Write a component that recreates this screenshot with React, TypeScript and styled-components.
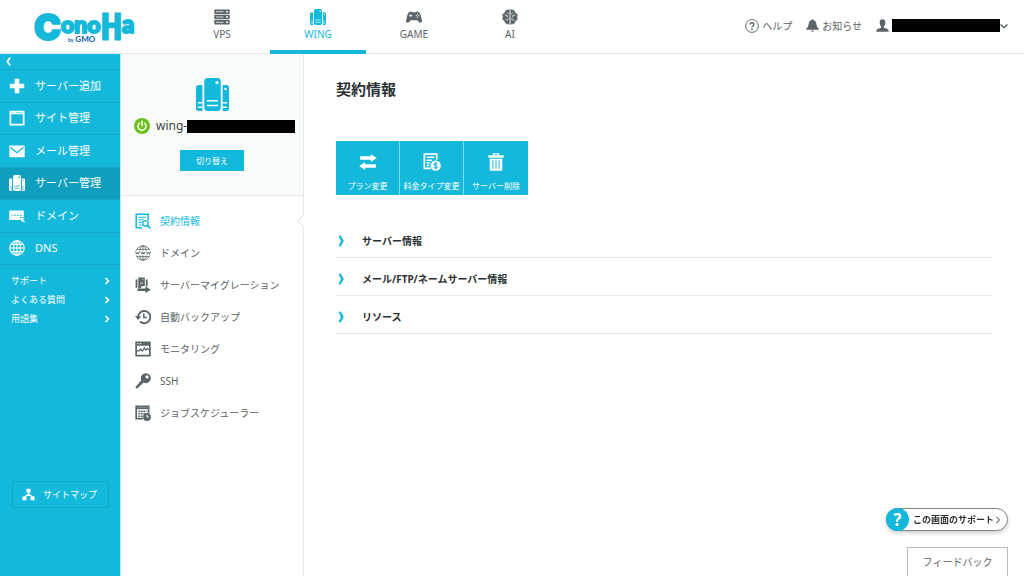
import React from 'react';
import styled, { createGlobalStyle, css } from 'styled-components';

const CYAN = '#13b8da';
const CYAN_DARK = '#0f9ebd';
const CYAN_LINE = '#11a8c8';
const INK = '#5b6467';
const LINE = '#e4e8e9';

const GlobalStyle = createGlobalStyle`
  *, *::before, *::after { box-sizing: border-box; }
  body {
    margin: 0;
    background: #fff;
    color: ${INK};
    font-family: "Noto Sans", "Noto Sans CJK JP", sans-serif;
    font-size: 10px;
    line-height: 16px;
  }
  button { font: inherit; color: inherit; background: none; border: 0; padding: 0; margin: 0; cursor: pointer; }
  a { color: inherit; text-decoration: none; }
  ul { list-style: none; margin: 0; padding: 0; }
  svg { display: block; flex: none; }
`;

/* ---------- icons ---------- */

type IconProps = { size?: number };

const Svg = ({ size = 16, children }: IconProps & { children: React.ReactNode }) => (
  <svg width={size} height={size} viewBox="0 0 16 16" fill="currentColor" aria-hidden="true">
    {children}
  </svg>
);

const line = { fill: 'none', stroke: 'currentColor' } as const;

const RackIcon = (p: IconProps) => (
  <Svg {...p}>
    {[0.5, 5.8, 11.1].map((y) => (
      <g key={y}>
        <rect x="0.3" y={y} width="15.4" height="4.5" rx="0.8" />
        <path d={`M2 ${y + 2.2}h7.5`} stroke="#fff" strokeWidth="0.8" />
        <circle cx="13" cy={y + 2.2} r="1" fill="#fff" />
      </g>
    ))}
  </Svg>
);

const WingIcon = ({ cut = '#fff', ...p }: IconProps & { cut?: string }) => (
  <Svg {...p}>
    <path d="M1.300 3.400H3.100V16H1.300Q0 16 0 14.700V4.700Q0 3.400 1.300 3.400Z" />
    <path d="M12.900 3.400h1.800Q16 3.400 16 4.700v10Q16 16 14.700 16h-1.800Z" />
    <rect x="4" y="0" width="8" height="16" rx="1.700" />
    <g stroke={cut} strokeWidth="0.700" fill="none">
      <path d="M5.300 11h5.400M5.300 13.300h5.400M.9 12h2.200M.9 14.200h2.200M12.900 12h2.200M12.900 14.200h2.200" />
    </g>
    <circle cx="10.200" cy="2.200" r="0.800" fill={cut} />
    <circle cx="14.300" cy="5.300" r="0.600" fill={cut} />
  </Svg>
);

const GamepadIcon = (p: IconProps) => (
  <Svg {...p}>
    <path d="M4 2.700Q5.500 2.400 6.400 3.200h3.200Q10.500 2.400 12 2.700 13.800 3.100 14.600 6L15.900 11.400q.3 2.300-1.300 2.400-1.300 0-3.300-2.600H4.700q-2 2.600-3.300 2.600Q-.2 13.700 .1 11.400L1.400 6Q2.200 3.100 4 2.700Z" />
    <path d="M4.700 5.200v2.800M3.300 6.600h2.800" stroke="#fff" strokeWidth="0.900" />
    <circle cx="11.500" cy="5.200" r="0.600" fill="#fff" />
    <circle cx="12.700" cy="6.700" r="0.600" fill="#fff" />
    <circle cx="10.300" cy="6.700" r="0.600" fill="#fff" />
    <circle cx="11.500" cy="8.200" r="0.600" fill="#fff" />
  </Svg>
);

const BrainIcon = (p: IconProps) => (
  <Svg {...p}>
    <path d="M7.600.8v14.400L4 14.600 2.600 12 .6 10.200 1.200 8 .6 5.600 2.700 4 4.200 1.300ZM8.400.8v14.400l3.600-.6L13.400 12l2-1.800L14.800 8l.6-2.400L13.300 4l-1.500-2.700Z" strokeLinejoin="round" stroke="currentColor" strokeWidth="0.600" />
    <path d="M8 1v14M2.800 6.200h2.400v2.400M13.200 6.200h-2.400v2.400M3.600 11h2l1-1.600M12.400 11h-2l-1-1.600M5.300 3.400l1.600 1.500M10.700 3.400 9.100 4.900" stroke="#fff" strokeWidth="0.700" fill="none" />
  </Svg>
);

const HelpIcon = (p: IconProps) => (
  <Svg {...p}>
    <circle cx="8" cy="8" r="7.300" {...line} strokeWidth="1.100" />
    <path d="M5.800 6.400Q5.800 4.300 8 4.300t2.200 2q0 1.200-1.200 1.800T8 9.600" {...line} strokeWidth="1.500" />
    <circle cx="8" cy="11.600" r="1" />
  </Svg>
);

const BellIcon = (p: IconProps) => (
  <Svg {...p}>
    <path d="M8 .2q1 0 1.100 1Q12.400 2 12.600 5.600q.2 4.400 3 6.200v1.400H.4v-1.400q2.800-1.800 3-6.200Q3.600 2 6.900 1.200 7 .2 8 .2ZM6 14h4q-.4 1.800-2 1.800T6 14Z" />
  </Svg>
);

const UserIcon = (p: IconProps) => (
  <Svg {...p}>
    <path d="M8 .3q3.500 0 3.500 3.900 0 3.400-1.800 5v1.600l4.500 1.500q1.500.6 1.500 3.400H.3q0-2.800 1.500-3.400l4.500-1.500V9.200q-1.800-1.600-1.800-5Q4.500.3 8 .3Z" />
  </Svg>
);

const Chevron = ({ size = 8, to = 'right', weight = 3 }: IconProps & { to?: 'right' | 'left' | 'down'; weight?: number }) => (
  <Svg size={size}>
    <path
      d={to === 'right' ? 'M5 2l6 6-6 6' : to === 'left' ? 'M11 1L6 8l5 7' : 'M1 5l7 6 7-6'}
      {...line}
      strokeWidth={weight}
    />
  </Svg>
);

const SectionMark = (p: IconProps) => (
  <Svg {...p}><path d="M3.200 1H6.600L10.400 8 6.600 15H3.200L6.600 8Z" /></Svg>
);

const PlusIcon = (p: IconProps) => (
  <Svg {...p}><path d="M5.700.8h4.600v4.900h4.900v4.600h-4.900v4.900H5.700v-4.900H.8V5.700h4.900Z" /></Svg>
);

const WindowIcon = (p: IconProps) => (
  <Svg {...p}>
    <path fillRule="evenodd" d="M.5.8h15v14.600H.5ZM2.200 4.200v9.600h11.600V4.200Z" />
    <path d="M2.500 2.500h1M4.800 2.500h1M7 2.500h6.500" stroke={CYAN} strokeWidth="0.500" />
  </Svg>
);

const MailIcon = (p: IconProps) => (
  <Svg {...p}>
    <rect x="0.300" y="2.600" width="15.400" height="11.600" rx="0.800" />
    <path d="M1.500 4.200 8 9.600l6.500-5.400" fill="none" stroke={CYAN} strokeWidth="1.200" />
  </Svg>
);

const DomainIcon = (p: IconProps) => (
  <Svg {...p}>
    <path d="M.8 2.500h13.400q.6 0 .6.600v6.500l-4-.8 1 3.200H.8q-.6 0-.6-.6V3.100q0-.6.6-.6Z" />
    <path d="M2.500 7.200h1M4.800 7.200h2M7.800 7.200h2M10.800 7.200h2" stroke={CYAN} strokeWidth="1.100" />
    <path d="m11.600 9.400 4 1.400-1.400.8 1.600 1.800-1 1-1.800-1.700-.7 1.300Z" />
  </Svg>
);

const GlobeIcon = ({ band, ...p }: IconProps & { band?: boolean }) => (
  <Svg {...p}>
    <g {...line} strokeWidth={band ? 0.8 : 1.1}>
      <circle cx="8" cy="8" r="7.200" />
      <ellipse cx="8" cy="8" rx="3.500" ry="7.200" />
      <path d="M8 .8v14.400M1.800 4.400h12.400M1.800 11.600h12.400" />
      {!band && <path d="M.8 8h14.400" />}
    </g>
    {band && (
      <>
        <rect x="0" y="5.700" width="16" height="4.600" fill="#fff" />
        <path d="m.5 6.600 1 2.600 1-2.200 1 2.200 1-2.600M6 6.600l1 2.600 1-2.200 1 2.200 1-2.600M11.500 6.600l1 2.600 1-2.200 1 2.200 1-2.600" {...line} strokeWidth="0.900" />
      </>
    )}
  </Svg>
);

const SitemapIcon = (p: IconProps) => (
  <Svg {...p}>
    <path d="M5.500 1h5v4.500h-5ZM.5 10.500h5v4.500h-5ZM10.500 10.500h5v4.500h-5Z" />
    <path d="M8 5v3M8 7.500 3 11M8 7.500l5 3.500" {...line} strokeWidth="1.600" />
  </Svg>
);

const PowerIcon = (p: IconProps) => (
  <Svg {...p}>
    <circle cx="8" cy="8" r="8" fill="#6cbf1c" />
    <path d="M5.300 5.200a4 4 0 1 0 5.400 0M8 3.300v4.500" fill="none" stroke="#fff" strokeWidth="1.500" strokeLinecap="round" />
  </Svg>
);

const ContractIcon = (p: IconProps) => (
  <Svg {...p}>
    <path d="M7 14.800H1.200V1.200h12v6" {...line} strokeWidth="1.500" />
    <path d="M3.500 4.200h7.500M3.500 6.800h5M3.500 9.400h3M3.500 12h2.600" {...line} strokeWidth="1.100" />
    <circle cx="10.400" cy="10.400" r="2.800" {...line} strokeWidth="1.400" />
    <path d="m12.400 12.400 3 3" {...line} strokeWidth="1.800" />
  </Svg>
);

const MigrationIcon = (p: IconProps) => (
  <Svg {...p}>
    <path d="M.6 2.600h1.800v8.200H.6ZM3.300.6h6.500v8.600H6.200v2H3.300ZM10.800 2.600h1.800v6.600h-1.800Z" />
    <path d="M2.400 11.600h8V9.200l5.400 3.500-5.400 3.300v-2h-8Z" />
    <path d="M5 6.200h3.200M7.400 2.400h1" stroke="#fff" strokeWidth="0.800" />
  </Svg>
);

const HistoryIcon = (p: IconProps) => (
  <Svg {...p}>
    <path d="M3.100 8a6.100 6.100 0 1 1 1.900 4.500" {...line} strokeWidth="1.900" />
    <path d="M0 7.200h6.200L3.100 11Z" />
    <path d="M8.800 4.400v4h3" {...line} strokeWidth="1.500" />
  </Svg>
);

const MonitorIcon = (p: IconProps) => (
  <Svg {...p}>
    <path fillRule="evenodd" d="M.3.600h15.400v14.800H.3ZM2 4.800v8.900h12V4.800Z" />
    <path d="M2 2.700h4.400" stroke="#fff" strokeWidth="1" strokeDasharray="1 0.700" />
    <path d="M2 9.800h2l1.600-1.600L7.400 10l2-3 1.400 2 1.400-1.400L14 9" {...line} strokeWidth="1.300" />
  </Svg>
);

const KeyIcon = (p: IconProps) => (
  <Svg {...p}>
    <path fillRule="evenodd" d="M10.800.3a4.900 4.900 0 1 1-2.200 9.200L3.400 14.600l-1.700 1.100L.3 14.300l6-7A4.900 4.900 0 0 1 10.800.3ZM12 2.300a1.600 1.600 0 1 0 .1 3.200 1.600 1.600 0 0 0-.1-3.200Z" />
  </Svg>
);

const SchedulerIcon = (p: IconProps) => (
  <Svg {...p}>
    <path d="M8 13.600H1.200V1.400h12.400V8" {...line} strokeWidth="1.700" />
    <path d="M1 3.200h13" {...line} strokeWidth="1.800" />
    <path d="M3.400 6.300h8.200M3.400 8.800h7M3.400 11.300h4.600" {...line} strokeWidth="1.500" strokeDasharray="1.800 0.700" />
    <circle cx="12" cy="12" r="3.900" />
    <path d="M12 9.800V12h1.800" fill="none" stroke="#fff" strokeWidth="1" />
  </Svg>
);

const SwapIcon = (p: IconProps) => (
  <Svg {...p}>
    <path d="M1 2.900h9.500V1L15.800 4.500 10.500 8V6.100H1ZM15 9.900H5.500V8L.2 11.500 5.500 15v-1.900H15Z" />
  </Svg>
);

const BillingIcon = (p: IconProps) => (
  <Svg {...p}>
    <path d="M7 13.600H1.200V1h11v5" {...line} strokeWidth="1.500" />
    <path d="M3.200 3.800h7M3.200 6.400h5M3.200 8.800h3M3.200 11.200h2.400" {...line} strokeWidth="1.300" />
    <circle cx="11.300" cy="11.200" r="4.600" />
    <path d="M12.800 9.600q-.4-.8-1.500-.8-1.500 0-1.500 1.100 0 .9 1.500 1.200t1.500 1.200q0 1.200-1.500 1.200-1.100 0-1.600-.8M11.300 8v6.400" fill="none" stroke={CYAN} strokeWidth="0.900" />
  </Svg>
);

const TrashIcon = (p: IconProps) => (
  <Svg {...p}>
    <path d="M5.200 2V.3h5.600V2h4v2.200H1.200V2ZM6.500 1.400V2h3v-.6Z" fillRule="evenodd" />
    <path d="M2.400 5h11.200v10q0 .8-.8.800H3.200q-.8 0-.8-.8Z" />
    <path d="M5.300 6.500v7.500M8 6.500v7.500M10.700 6.500v7.500" stroke={CYAN} strokeWidth="0.900" />
  </Svg>
);

/* ---------- header ---------- */

const Page = styled.div`
  min-height: 100vh;
  display: flex;
  flex-direction: column;
`;

const Header = styled.header`
  display: flex;
  height: 54px;
  border-bottom: 1px solid ${LINE};
`;

const Brand = styled.a`
  width: 174px;
  flex: none;
  padding-left: 32px;
`;

const ServiceNav = styled.nav`
  display: flex;
`;

const ServiceLink = styled.a<{ $active?: boolean }>`
  width: 96px;
  height: 54px;
  display: flex;
  flex-direction: column;
  align-items: center;
  padding-top: 9px;
  gap: 1px;
  color: ${({ $active }) => ($active ? CYAN : INK)};
  border-bottom: 4px solid ${({ $active }) => ($active ? CYAN : 'transparent')};
`;

const Account = styled.div`
  margin-left: auto;
  padding: 0 16px 2px 0;
  display: flex;
  align-items: center;
  gap: 14px;
`;

const AccountButton = styled.button`
  display: flex;
  align-items: center;
  gap: 3px;
`;

const MaskedWithArrow = styled.span`
  display: flex;
  align-items: center;
`;

const Masked = styled.span`
  width: 108px;
  height: 13px;
  flex: none;
  background: #000;
`;

const Logo = () => (
  <svg width="108" height="53" viewBox="0 0 108 53" role="img" aria-label="ConoHa by GMO">
    <g fill={CYAN} stroke={CYAN} strokeWidth="2" strokeLinejoin="round" fontWeight="900" fontFamily="Lato, sans-serif">
      <text x="2" y="40" fontSize="36" fontFamily="Inter, sans-serif">C</text>
      <text x="29" y="33" fontSize="23">ono</text>
      <text x="68" y="40" fontSize="38" strokeWidth="1" fontFamily="DejaVu Sans Mono, monospace">H</text>
      <text x="90" y="33" fontSize="24">a</text>
    </g>
    <text x="36" y="42" fill="#1d6bb5" fontFamily="Lato, sans-serif" fontWeight="900" fontSize="5">
      by<tspan fontSize="8"> GMO</tspan>
    </text>
  </svg>
);

/* ---------- left menu ---------- */

const Body = styled.div`
  flex: 1;
  display: flex;
`;

const Sidebar = styled.aside`
  width: 120px;
  flex: none;
  display: flex;
  flex-direction: column;
  background: ${CYAN};
  color: #fff;
`;

const Collapse = styled.button`
  height: 15px;
  padding-left: 4px;
  display: flex;
  align-items: center;
`;

const MainMenu = styled.ul`
  height: 196px;
  display: grid;
  grid-template-rows: repeat(6, 1fr);
  border-bottom: 1px solid ${CYAN_LINE};
`;

const MenuLink = styled.a<{ $active?: boolean }>`
  height: 100%;
  display: flex;
  align-items: center;
  gap: 10px;
  padding-left: 9px;
  font-size: 11px;
  border-top: 1px solid ${CYAN_LINE};
  background: ${({ $active }) => ($active ? CYAN_DARK : 'transparent')};
`;

const HelpMenu = styled.ul`
  padding-top: 6px;
  font-size: 9px;
`;

const HelpLink = styled.a`
  height: 19px;
  padding: 0 9px 0 11px;
  display: flex;
  align-items: center;
  justify-content: space-between;
`;

const SitemapButton = styled.button`
  margin: auto 11px 68px 12px;
  height: 27px;
  padding-left: 9px;
  display: flex;
  align-items: center;
  gap: 8px;
  font-size: 9px;
  border: 1px solid ${CYAN_LINE};
`;

/* ---------- server panel ---------- */

const Panel = styled.section`
  width: 184px;
  flex: none;
  border-left: 1px solid #b8eaf4;
  border-right: 1px solid ${LINE};
`;

const ServerCard = styled.div`
  height: 142px;
  padding-top: 24px;
  display: flex;
  flex-direction: column;
  align-items: center;
  color: ${CYAN};
  border-bottom: 1px solid ${LINE};
  background: #f9fafa radial-gradient(circle at 2px 2px, #f3f5f5 1px, transparent 1px) 0 0 / 8px 8px;
`;

const ServerName = styled.div`
  width: 100%;
  margin-top: 7px;
  padding: 0 9px 0 13px;
  display: flex;
  align-items: center;
  color: #3e4649;
  font-size: 12px;
`;

const NameText = styled.span`
  margin-left: 6px;
  flex: 1;
  white-space: nowrap;
`;

const SwitchButton = styled.button`
  width: 64px;
  height: 21px;
  margin-top: 16px;
  background: ${CYAN};
  color: #fff;
  font-size: 8px;
`;

const PanelMenu = styled.ul`
  padding-top: 9px;
`;

const PanelItem = styled.li<{ $active?: boolean }>`
  position: relative;
  ${({ $active }) =>
    $active &&
    css`
      color: ${CYAN};
      &::after {
        content: '';
        position: absolute;
        right: -6px;
        top: 11px;
        width: 10px;
        height: 10px;
        transform: rotate(45deg);
        background: #fff;
        border-left: 1px solid ${LINE};
        border-bottom: 1px solid ${LINE};
      }
    `}
`;

const PanelLink = styled.a`
  height: 32px;
  padding-left: 14px;
  display: flex;
  align-items: center;
  gap: 9px;
`;

/* ---------- content ---------- */

const Content = styled.main`
  flex: 1;
  min-width: 0;
  padding: 23px 32px 64px;
`;

const Title = styled.h1`
  margin: 0 0 40px;
  font-size: 15px;
  line-height: 24px;
  color: #2b3133;
`;

const Actions = styled.div`
  display: flex;
  margin-bottom: 25px;
`;

const ActionButton = styled.button`
  width: 64px;
  height: 54px;
  padding-top: 12px;
  display: flex;
  flex-direction: column;
  align-items: center;
  gap: 7px;
  background: ${CYAN};
  color: #fff;
  font-size: 8px;
  white-space: nowrap;
  &:not(:last-child) { border-right: 1px solid #7ddbed; }
`;

const SectionButton = styled.button`
  width: 100%;
  height: 38px;
  display: flex;
  align-items: center;
  gap: 14px;
  color: #2b3133;
  font-weight: 700;
  border-bottom: 1px solid ${LINE};
  padding-top: 5px;
  svg { color: ${CYAN}; }
`;

/* ---------- floating helpers ---------- */

const SupportButton = styled.button`
  position: fixed;
  right: 16px;
  bottom: 45px;
  height: 23px;
  padding: 0 5px 0 26px;
  display: flex;
  align-items: center;
  background: #fff;
  color: #2b3133;
  font-size: 9px;
  font-weight: 700;
  border: 1px solid #7d8689;
  border-radius: 12px;
  box-shadow: 0 2px 4px rgba(0, 0, 0, 0.2);
`;

const SupportMark = styled.span`
  position: absolute;
  left: -1px;
  top: -1px;
  width: 23px;
  height: 23px;
  border-radius: 50%;
  background: ${CYAN};
  color: #fff;
  font-size: 17px;
  line-height: 23px;
  text-align: center;
`;

const FeedbackButton = styled.button`
  position: fixed;
  right: 16px;
  bottom: 0;
  width: 101px;
  height: 29px;
  background: #fff;
  border: 1px solid #b6bcbe;
  border-bottom: 0;
`;

const services = [
  { label: 'VPS', icon: <RackIcon /> },
  { label: 'WING', icon: <WingIcon />, active: true },
  { label: 'GAME', icon: <GamepadIcon /> },
  { label: 'AI', icon: <BrainIcon /> },
];

const menu = [
  { label: 'サーバー追加', icon: <PlusIcon /> },
  { label: 'サイト管理', icon: <WindowIcon /> },
  { label: 'メール管理', icon: <MailIcon /> },
  { label: 'サーバー管理', icon: <WingIcon cut={CYAN_DARK} />, active: true },
  { label: 'ドメイン', icon: <DomainIcon /> },
  { label: 'DNS', icon: <GlobeIcon /> },
];

const panelMenu = [
  { label: '契約情報', icon: <ContractIcon />, active: true },
  { label: 'ドメイン', icon: <GlobeIcon band /> },
  { label: 'サーバーマイグレーション', icon: <MigrationIcon /> },
  { label: '自動バックアップ', icon: <HistoryIcon /> },
  { label: 'モニタリング', icon: <MonitorIcon /> },
  { label: 'SSH', icon: <KeyIcon /> },
  { label: 'ジョブスケジューラー', icon: <SchedulerIcon /> },
];

const actions = [
  { label: 'プラン変更', icon: <SwapIcon size={18} /> },
  { label: '料金タイプ変更', icon: <BillingIcon size={18} /> },
  { label: 'サーバー削除', icon: <TrashIcon size={18} /> },
];

export default function App() {
  return (
    <Page>
      <GlobalStyle />
      <Header>
        <Brand href="#"><Logo /></Brand>
        <ServiceNav>
          {services.map((s) => (
            <ServiceLink key={s.label} href="#" $active={s.active}>{s.icon}{s.label}</ServiceLink>
          ))}
        </ServiceNav>
        <Account>
          <AccountButton><HelpIcon size={14} />ヘルプ</AccountButton>
          <AccountButton><BellIcon size={13} />お知らせ</AccountButton>
          <AccountButton aria-label="アカウント">
            <UserIcon size={13} />
            <MaskedWithArrow><Masked /><Chevron to="down" size={8} /></MaskedWithArrow>
          </AccountButton>
        </Account>
      </Header>
      <Body>
        <Sidebar>
          <Collapse aria-label="メニューを閉じる"><Chevron to="left" size={9} /></Collapse>
          <MainMenu>
            {menu.map((m) => (
              <li key={m.label}><MenuLink href="#" $active={m.active}>{m.icon}{m.label}</MenuLink></li>
            ))}
          </MainMenu>
          <HelpMenu>
            {['サポート', 'よくある質問', '用語集'].map((label) => (
              <li key={label}><HelpLink href="#">{label}<Chevron size={8} /></HelpLink></li>
            ))}
          </HelpMenu>
          <SitemapButton><SitemapIcon size={13} />サイトマップ</SitemapButton>
        </Sidebar>
        <Panel>
          <ServerCard>
            <WingIcon size={33} cut="#f9fafa" />
            <ServerName><PowerIcon /><NameText>wing-</NameText><Masked /></ServerName>
            <SwitchButton>切り替え</SwitchButton>
          </ServerCard>
          <PanelMenu>
            {panelMenu.map((m) => (
              <PanelItem key={m.label} $active={m.active}>
                <PanelLink href="#">{m.icon}{m.label}</PanelLink>
              </PanelItem>
            ))}
          </PanelMenu>
        </Panel>
        <Content>
          <Title>契約情報</Title>
          <Actions>
            {actions.map((a) => (
              <ActionButton key={a.label}>{a.icon}{a.label}</ActionButton>
            ))}
          </Actions>
          {['サーバー情報', 'メール/FTP/ネームサーバー情報', 'リソース'].map((label) => (
            <SectionButton key={label} aria-expanded={false}><SectionMark size={12} />{label}</SectionButton>
          ))}
        </Content>
      </Body>
      <SupportButton>
        <SupportMark>?</SupportMark>この画面のサポート<Chevron size={8} weight={2} />
      </SupportButton>
      <FeedbackButton>フィードバック</FeedbackButton>
    </Page>
  );
}
